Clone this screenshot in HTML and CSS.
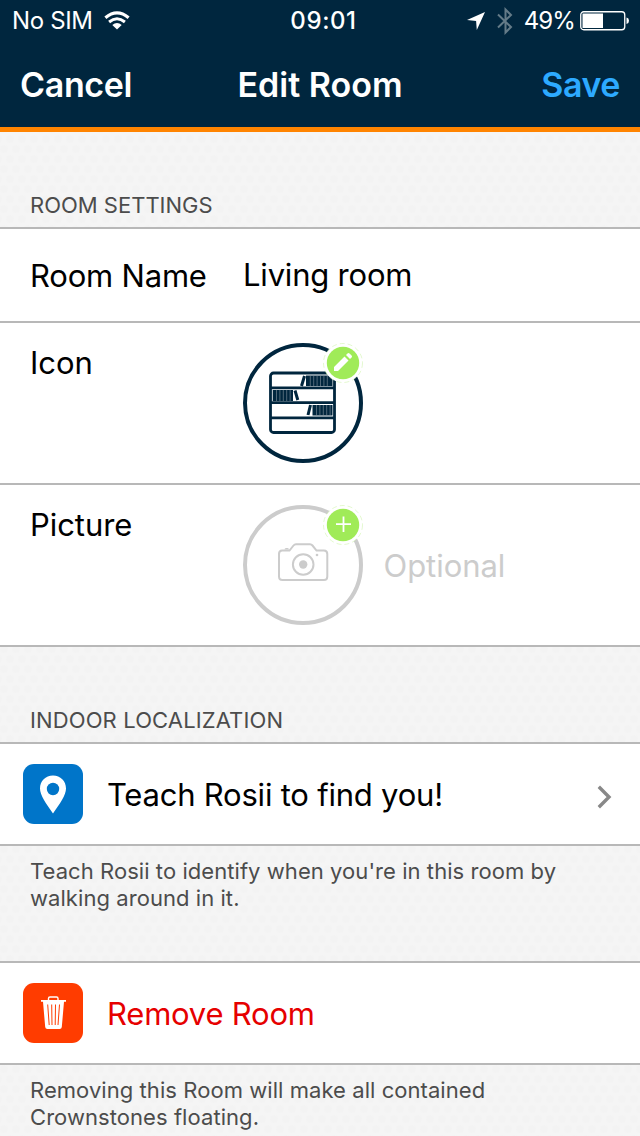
FILE: index.html
```html
<!DOCTYPE html>
<html lang="en">
<head>
<meta charset="utf-8">
<title>Edit Room</title>
<link rel="stylesheet" href="styles.css">
</head>
<body>
<header class="top">
  <div class="status">
    <div class="status-left">
      <span class="sim">No SIM</span>
      <svg class="wifi" width="26" height="19" viewBox="0 0 26 19" fill="none" stroke="#fff">
        <path d="M1.4 6.7Q13-2.9 24.6 6.7" stroke-width="3.2"/>
        <path d="M5.1 11Q13 4.6 20.9 11" stroke-width="3"/>
        <path d="M8.3 14Q13 10.2 17.700 14L13 18.600Z" fill="#fff" stroke="none"/>
      </svg>
    </div>
    <span class="time">09:01</span>
    <div class="status-right">
      <svg class="arrow" width="18" height="18" viewBox="0 0 18 18"><path d="M18 0L9.800 18L9.100 8.900L0 8Z" fill="#fff"/></svg>
      <svg class="bluetooth" width="16" height="28" viewBox="0 0 16 28" fill="none" stroke="#647b88" stroke-width="2"><path d="M1 7.500L14 20L8.500 25.500V2.500L14 8L1 20.500"/></svg>
      <span class="percent">49%</span>
      <svg class="battery" width="50" height="20" viewBox="0 0 50 20"><rect x=".75" y=".75" width="44" height="18" rx="3" fill="none" stroke="#fff" stroke-width="1.300"/><path d="M2.500 2.500H23V17H2.500ZM46.500 6.500Q49 7 49 9.750T46.500 13Z" fill="#fff"/></svg>
    </div>
  </div>
  <nav class="nav">
    <span class="cancel">Cancel</span>
    <h1 class="title">Edit Room</h1>
    <span class="save">Save</span>
  </nav>
</header>
<main>
  <h2 class="section first">ROOM SETTINGS</h2>
  <div class="row name-row"><span class="label room-name">Room Name</span><span class="value">Living room</span></div>
  <div class="row tall">
    <span class="label icon-label">Icon</span>
    <svg class="round" width="120" height="120" viewBox="0 0 120 120">
      <circle cx="60" cy="60" r="58" fill="#fff" stroke="#00263e" stroke-width="4"/>
      <g fill="none" stroke="#00263e" stroke-width="2.800"><rect x="27.500" y="30" width="64" height="59.500" rx="3"/><path d="M27.500 44.800H91.500M27.500 59.600H91.500M27.500 74.800H91.500"/></g>
      <path d="M63 32.500H89.500V43H63ZM29.700 47H50V58H29.700ZM69.500 62H89.500V72.500H69.500Z" fill="#00263e"/>
      <path d="M61.500 33L58.500 43M52 47.500L54.800 57M67.500 62L65 72" stroke="#00263e" stroke-width="3"/>
      <path d="M67.300 33V43M70.700 33V43M74.100 33V43M77.500 33V43M80.900 33V43M84.300 33V43M33.500 47V58M36.900 47V58M40.300 47V58M43.700 47V58M47.100 47V58M73.500 62V73M76.900 62V73M80.300 62V73M83.700 62V73M87.100 62V73" stroke="#8796a1" stroke-width=".6"/>
      <circle cx="100" cy="20" r="19.500" fill="#fff" stroke="#c9f3a0" stroke-width=".5" stroke-dasharray="5 3"/>
      <circle cx="100" cy="20" r="16.200" fill="#a0eb58"/>
      <path d="M91 24L101.500 13.500L105.500 17.500L95 28H91ZM103 12L104.500 10.500Q105.500 9.600 106.500 10.500L108.600 12.600Q109.500 13.500 108.600 14.500L107 16Z" fill="#fff"/>
    </svg>
  </div>
  <div class="row tall">
    <span class="label picture-label">Picture</span>
    <svg class="round" width="120" height="120" viewBox="0 0 120 120">
      <circle cx="60" cy="60" r="58" fill="#fff" stroke="#ccc" stroke-width="4"/>
      <g fill="none" stroke="#ccc" stroke-width="2"><path d="M39 45.500H46.500L50.500 40.500Q51.500 39.300 53 39.300H67Q68.500 39.300 69.500 40.500L73.500 45.500H81Q84.300 45.500 84.300 49V71.500Q84.300 75 81 75H39.500Q36 75 36 71.500V49Q36 45.500 39 45.500Z"/><circle cx="60.200" cy="59.500" r="10.300"/></g>
      <path d="M41.500 44.500Q41.500 43 43 43H44.500Q46 43 46 44.500Z" fill="#ccc"/><circle cx="60.200" cy="59.500" r="4.200" fill="#ccc"/><circle cx="74" cy="50" r="1.300" fill="#ccc"/>
      <circle cx="100" cy="20" r="19.500" fill="#fff" stroke="#c9f3a0" stroke-width=".5" stroke-dasharray="5 3"/>
      <circle cx="100" cy="20" r="16.200" fill="#a0eb58"/>
      <path d="M93 19.200H108M100.500 11.500V27" stroke="#fff" stroke-width="1.800"/>
    </svg>
    <span class="optional">Optional</span>
  </div>
  <h2 class="section second">INDOOR LOCALIZATION</h2>
  <div class="row action">
    <svg class="tile" width="60" height="60" viewBox="0 0 60 60"><rect width="60" height="60" rx="11" fill="#0075c9"/><path d="M30 11.500C22.500 11.500 17 17 17 24.500C17 31 23 39.500 30 49.500C37 39.500 43 31 43 24.500C43 17 37.500 11.500 30 11.500Z" fill="#fff"/><circle cx="30" cy="25" r="6.200" fill="#0075c9"/></svg>
    <span class="label teach">Teach Rosii to find you!</span>
    <svg class="chevron" width="15" height="24" viewBox="0 0 15 24"><path d="M1.800 1.800L12 12L1.800 22.200" fill="none" stroke="#888" stroke-width="3.400"/></svg>
  </div>
  <p class="note teach-note">Teach Rosii to identify when you're in this room by<br>walking around in it.</p>
  <div class="row action">
    <svg class="tile" width="60" height="60" viewBox="0 0 60 60"><rect width="60" height="60" rx="11" fill="#ff3c00"/><path d="M25.500 17.500V15.500Q25.500 14 27 14H33.500Q35 14 35 15.500V17.500" fill="none" stroke="#fff" stroke-width="1.400"/><path d="M18 17H43V18.800H41L38.800 44Q38.600 46 36.600 46H24.400Q22.400 46 22.200 44L20 18.800H18Z" fill="#fff"/><path d="M24.700 21.500L26.200 42M28.700 21.500L29 42M32.500 21.500L32.200 42M36.500 21.500L35 42" stroke="#ff3c00" stroke-width="1"/></svg>
    <span class="label remove">Remove Room</span>
  </div>
  <p class="note remove-note">Removing this Room will make all contained<br>Crownstones floating.</p>
</main>
</body>
</html>
```
FILE: styles.css
```css
* { box-sizing: border-box; }
body {
  margin: 0;
  width: 640px;
  height: 1136px;
  overflow: hidden;
  font-family: Inter, "Liberation Sans", sans-serif;
  background-color: #f5f5f5;
  background-image:
    radial-gradient(circle, #f3f3f3 3.5px, transparent 4.5px),
    radial-gradient(circle, #f3f3f3 3.5px, transparent 4.5px);
  background-size: 12px 20px;
  background-position: 4px 9px, 10px 19px;
  color: #000;
  white-space: nowrap;
}
.top { height: 132px; background: #00263e; border-bottom: 5px solid #ff8400; color: #fff; }
.status { height: 41px; display: grid; grid-template-columns: 1fr auto 1fr; align-items: center; font-size: 24px; line-height: 40px; padding: 0 10px 0 12px; }
.status-left, .status-right { display: flex; align-items: center; }
.status-right { justify-content: flex-end; }
.sim { letter-spacing: -.35px; }
.wifi { margin-left: 11px; }
.time { font-weight: 500; letter-spacing: .6px; padding-left: 5px; }
.arrow { margin-right: 12px; }
.bluetooth { margin-right: 11px; }
.percent { letter-spacing: -.9px; }
.battery { margin-left: 5px; }
.nav { height: 86px; display: grid; grid-template-columns: 1fr auto 1fr; align-items: center; padding: 0 20px; font-size: 34px; font-weight: 600; line-height: 87px; }
.title { margin: 0; font-size: 34px; font-weight: 600; }
.cancel { letter-spacing: -.35px; }
.save { color: #2daaff; text-align: right; letter-spacing: -.45px; }
.section { margin: 0; padding-left: 30px; font-size: 22px; line-height: 30px; font-weight: 400; color: #4c4c4c; }
.first { height: 95px; padding-top: 58px; }
.second { height: 95px; padding-top: 58px; letter-spacing: .12px; }
.row { display: flex; background: #fff; border-top: 2px solid #b8b8b8; border-bottom: 2px solid #b8b8b8; font-size: 31px; line-height: 40px; letter-spacing: -.2px; }
.row + .row { border-top: 0; }
.name-row { height: 96px; padding: 26px 30px; }
.name-row .label { margin-top: 1px; width: 213px; }
.tall { height: 162px; padding: 20px 30px; letter-spacing: -.05px; }
.tall .label { width: 213px; }
.round { flex: none; }
.optional { margin: 41px 0 0 20.5px; color: #ccc; }
.action { height: 104px; padding: 20px 28px 20px 23px; }
.action .label { margin: 11px 0 0 24px; letter-spacing: -.22px; }
.chevron { margin: 21px 0 0 auto; }
.remove { color: #e60000; }
.note { margin: 0; padding: 12px 30px 0; height: 115px; font-size: 22px; line-height: 27px; letter-spacing: .06px; color: #4c4c4c; }
```
